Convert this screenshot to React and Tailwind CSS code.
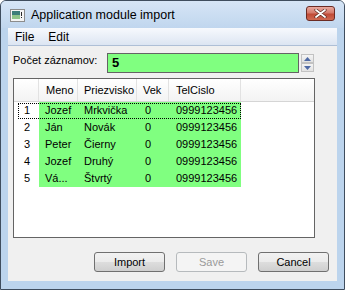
import React from 'react'

const rows = [
  { n: 1, meno: "Jozef", priezvisko: "Mrkvička", vek: "0", tel: "0999123456" },
  { n: 2, meno: "Ján", priezvisko: "Novák", vek: "0", tel: "0999123456" },
  { n: 3, meno: "Peter", priezvisko: "Čierny", vek: "0", tel: "0999123456" },
  { n: 4, meno: "Jozef", priezvisko: "Druhý", vek: "0", tel: "0999123456" },
  { n: 5, meno: "Vá...", priezvisko: "Štvrtý", vek: "0", tel: "0999123456" },
];

const WinButton = ({ children, disabled }) => (
  <button
    disabled={disabled}
    className={
      disabled
        ? "w-[71px] h-[20px] rounded-[3px] border border-[#b6babd] bg-[#f4f4f4] text-[#9a9a9a] text-[11px]"
        : "w-[71px] h-[20px] rounded-[3px] border border-[#707070] bg-[linear-gradient(#f2f2f2_0%,#ebebeb_50%,#dddddd_51%,#cfcfcf_100%)] text-black text-[11px]"
    }
  >
    {children}
  </button>
);

const App = () => {
  return (
    <div className="w-[345px] h-[290px] flex flex-col bg-[#bcd4ed] border border-[#3f4d5e] rounded-t-[6px] overflow-hidden font-['Liberation_Sans',Arial,sans-serif] text-black select-none">
      {/* title bar */}
      <div className="h-[27px] shrink-0 flex items-center pl-[9px] pr-[9px] bg-[linear-gradient(#d6e5f6,#c0d6ee)]">
        <svg width="15" height="13" viewBox="0 0 15 13" className="mt-[1px]">
          <rect x="0.5" y="0.5" width="14" height="12" fill="#f4f4f4" stroke="#8c8c8c" />
          <rect x="2" y="2" width="8" height="8" fill="#3c7d7a" />
          <rect x="2" y="6" width="8" height="4" fill="#8fc48a" />
          <rect x="11" y="3" width="1" height="4" fill="#2a2a2a" />
          <rect x="11" y="8" width="1" height="1" fill="#2a2a2a" />
        </svg>
        <span className="ml-[6px] text-[12.5px] leading-none mt-[2px]">Application module import</span>
        <div className="ml-auto mt-[-2px] w-[29px] h-[15px] rounded-[3px] border border-[#6b2b23] bg-[linear-gradient(#e9a99e_0%,#d47a6b_45%,#c04a36_55%,#cf6a52_100%)] flex items-center justify-center">
          <svg width="13" height="9" viewBox="0 0 13 9">
            <path d="M2 1 L11 8 M11 1 L2 8" stroke="#5a2a22" strokeWidth="3.2" strokeLinecap="round" />
            <path d="M2 1 L11 8 M11 1 L2 8" stroke="#ffffff" strokeWidth="1.8" strokeLinecap="round" />
          </svg>
        </div>
      </div>

      <div className="flex-1 flex flex-col px-[7px] pb-[8px]">
        {/* menu bar */}
        <div className="h-[18px] shrink-0 flex items-center pl-[7px] gap-[14px] text-[12px] bg-[linear-gradient(#f7f9fd,#dce5f2)] border-b border-[#aebfd6]">
          <span>File</span>
          <span>Edit</span>
        </div>

        {/* client area */}
        <div className="flex-1 flex flex-col bg-[#f0f0f0] pl-[5px] pt-[7px]">
          <div className="flex items-center h-[20px]">
            <span className="w-[94px] text-[11px] mt-[-6px]">Počet záznamov:</span>
            <div className="w-[192px] h-[20px] bg-[#80ff80] border border-[#646464] flex items-center pl-[4px] text-[13px] font-bold">
              5
            </div>
            <div className="ml-[2px] w-[13px] h-[18px] flex flex-col gap-[0px]">
              <div className="h-[9px] border border-[#c2c2c2] bg-[linear-gradient(#f4f4f4,#e2e2e2)] flex items-center justify-center">
                <svg width="7" height="4" viewBox="0 0 7 4"><path d="M0 4 L3.5 0 L7 4 Z" fill="#4f6aa5" /></svg>
              </div>
              <div className="h-[9px] border border-[#c2c2c2] bg-[linear-gradient(#f4f4f4,#e2e2e2)] flex items-center justify-center">
                <svg width="7" height="4" viewBox="0 0 7 4"><path d="M0 0 L7 0 L3.5 4 Z" fill="#4f6aa5" /></svg>
              </div>
            </div>
          </div>

          {/* grid */}
          <div className="mt-[5px] w-[302px] h-[160px] border border-[#646464] bg-white text-[11px]">
            <div className="flex h-[23px] bg-[linear-gradient(#ffffff,#f3f3f3)] border-b border-[#d5d5d5]">
              <div className="w-[25px] border-r border-[#e2e2e2]" />
              <div className="w-[39px] pl-[7px] flex items-center border-r border-[#e2e2e2]">Meno</div>
              <div className="w-[59px] pl-[6px] flex items-center border-r border-[#e2e2e2]">Priezvisko</div>
              <div className="w-[32px] pl-[6px] flex items-center border-r border-[#e2e2e2]">Vek</div>
              <div className="w-[72px] pl-[7px] flex items-center border-r border-[#e2e2e2]">TelCislo</div>
              <div className="flex-1" />
            </div>
            {rows.map((r) => (
              <div key={r.n} className="relative flex h-[17px] items-center">
                <div className="w-[25px] h-full flex items-center pl-[10px]">{r.n}</div>
                <div className="w-[202px] h-full flex items-center bg-[#80ff80]">
                  <div className="w-[39px] pl-[6px]">{r.meno}</div>
                  <div className="w-[60px] pl-[6px]">{r.priezvisko}</div>
                  <div className="w-[31px] pl-[7px]">{r.vek}</div>
                  <div className="w-[72px] pl-[7px]">{r.tel}</div>
                </div>
                {r.n === 1 && (
                  <div className="absolute left-[4px] top-[1px] w-[223px] h-[16px] border border-dotted border-black" />
                )}
              </div>
            ))}
          </div>

          <div className="mt-[14px] flex justify-end gap-[11px] pr-[8px]">
            <WinButton>Import</WinButton>
            <WinButton disabled>Save</WinButton>
            <WinButton>Cancel</WinButton>
          </div>
        </div>
      </div>
    </div>
  );
};

export default App;
